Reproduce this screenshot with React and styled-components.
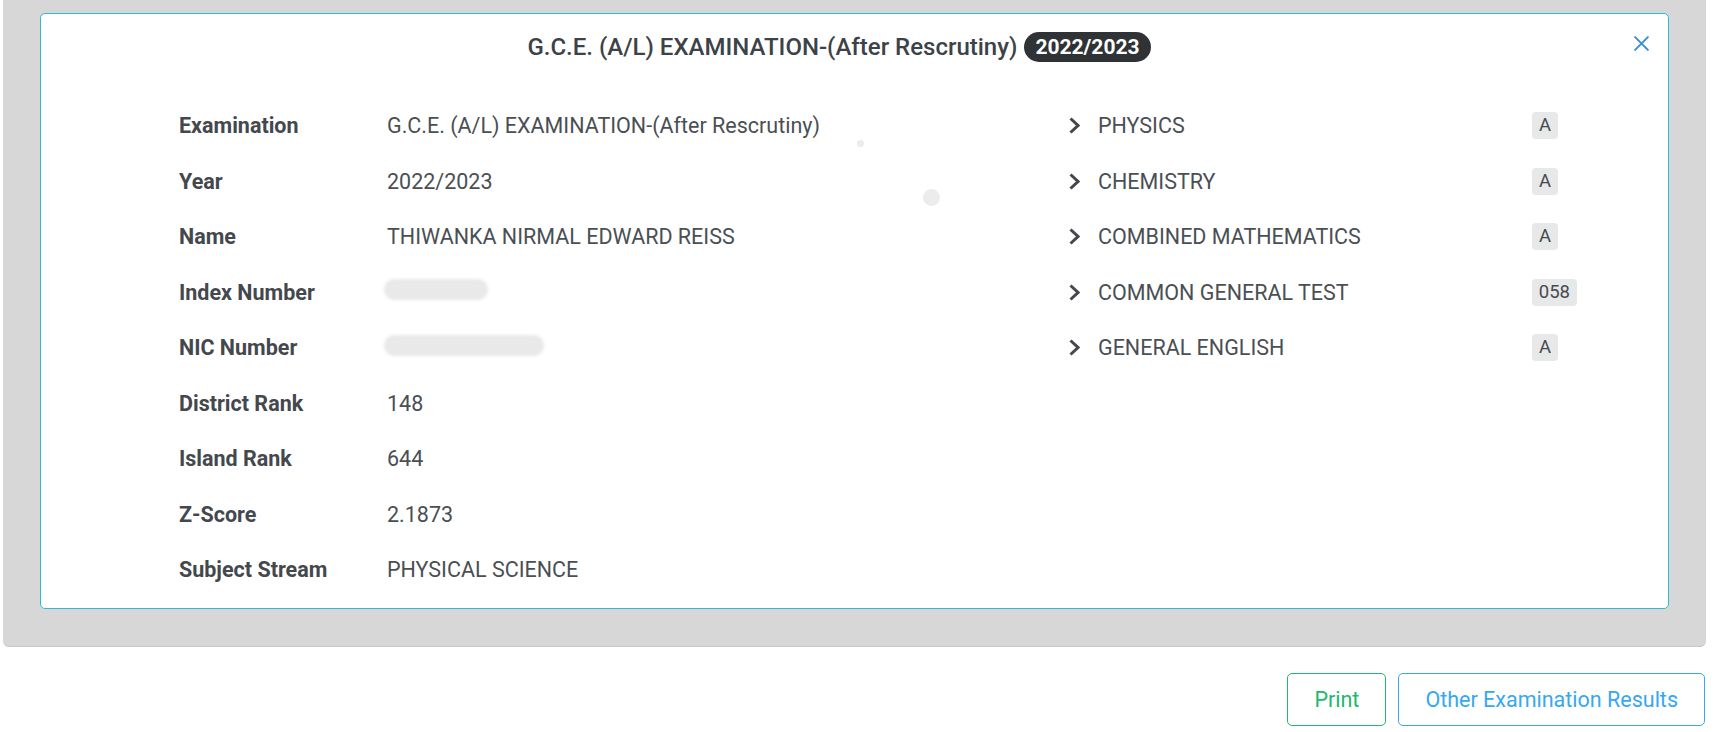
import React from 'react'
import styled, { createGlobalStyle } from 'styled-components'

const GlobalStyle = createGlobalStyle`
  html, body {
    margin: 0;
    padding: 0;
    background: #fff;
    font-family: Roboto, "Liberation Sans", sans-serif;
  }
`

const Page = styled.div`
  width: 1715px;
`

const Panel = styled.section`
  margin: 0 9px 0 3px;
  padding: 13px 37px 37px 37px;
  background: #d7d7d7;
  border-bottom: 1px solid #c8c8c8;
  border-radius: 0 0 6px 6px;
`

const Card = styled.div`
  position: relative;
  background: #fff;
  border: 1px solid #2bbdd3;
  border-radius: 5px;
  padding: 15px 0 10px 0;
`

const Header = styled.header`
  display: flex;
  justify-content: center;
  align-items: center;
  gap: 7px;
  height: 36px;
  margin-left: -31px;
`

const Title = styled.h2`
  margin: 0;
  font-size: 24px;
  font-weight: 500;
  color: #3d4247;
`

const YearPill = styled.span`
  background: #2f3336;
  color: #fff;
  font-weight: 700;
  font-size: 21px;
  border-radius: 15px;
  padding: 3px 11px 3px;
  line-height: 24px;
`

const Close = styled.button`
  position: absolute;
  top: 19px;
  right: 17px;
  border: 0;
  background: none;
  padding: 0;
  width: 20px;
  height: 20px;
  cursor: pointer;
  display: flex;
  align-items: center;
  justify-content: center;
`

const Body = styled.div`
  display: grid;
  grid-template-columns: 889px 1fr;
  padding-left: 138px;
  margin-top: 33px;
`

const Details = styled.div`
  display: flex;
  flex-direction: column;
`

const Row = styled.div`
  display: flex;
  align-items: center;
  height: 55.5px;
  font-size: 21.5px;
  color: #4a4f54;
`

const Label = styled.div`
  width: 208px;
  font-weight: 700;
  color: #44484d;
`

const Value = styled.div`
  color: #4a4f54;
`

const Redacted = styled.span`
  display: inline-block;
  width: ${p => p.w}px;
  height: 21px;
  background: #e9e9e9;
  border-radius: 10px;
  filter: blur(1.5px);
  margin-left: -3px;
`

const Subjects = styled.div`
  display: flex;
  flex-direction: column;
`

const SubjectRow = styled(Row)`
  width: 509px;
`

const Chevron = styled.svg`
  width: 12px;
  height: 17px;
  margin-right: 18px;
  flex-shrink: 0;
`

const SubjectName = styled.div`
  flex: 1;
  color: #4a4f54;
`

const Grade = styled.span`
  background: #e7e8e8;
  border-radius: 4px;
  font-size: 18.5px;
  color: #454a4f;
  padding: 0 7px;
  height: 27px;
  line-height: 27px;
  margin-right: ${p => (p.wide ? '0' : '19px')};
`

const Dot = styled.span`
  position: absolute;
  left: ${p => p.x}px;
  top: ${p => p.y}px;
  width: ${p => p.d}px;
  height: ${p => p.d}px;
  border-radius: 50%;
  background: #ececec;
`

const Actions = styled.div`
  display: flex;
  justify-content: flex-end;
  gap: 12px;
  margin: 26px 10px 0 0;
`

const Button = styled.button`
  height: 53px;
  padding: 0 26px;
  background: #fff;
  border: 1px solid ${p => p.color};
  color: ${p => p.color};
  border-radius: 5px;
  font-family: Roboto, "Liberation Sans", sans-serif;
  font-size: 21.5px;
  cursor: pointer;
`

const details = [
  ['Examination', 'G.C.E. (A/L) EXAMINATION-(After Rescrutiny)'],
  ['Year', '2022/2023'],
  ['Name', 'THIWANKA NIRMAL EDWARD REISS'],
  ['Index Number', null, 104],
  ['NIC Number', null, 160],
  ['District Rank', '148'],
  ['Island Rank', '644'],
  ['Z-Score', '2.1873'],
  ['Subject Stream', 'PHYSICAL SCIENCE'],
]

const subjects = [
  ['PHYSICS', 'A'],
  ['CHEMISTRY', 'A'],
  ['COMBINED MATHEMATICS', 'A'],
  ['COMMON GENERAL TEST', '058'],
  ['GENERAL ENGLISH', 'A'],
]

export default function App() {
  return (
    <Page>
      <GlobalStyle />
      <Panel>
        <Card>
          <Header>
            <Title>G.C.E. (A/L) EXAMINATION-(After Rescrutiny)</Title>
            <YearPill>2022/2023</YearPill>
          </Header>
          <Close aria-label="close">
            <svg width="17" height="17" viewBox="0 0 16 16">
              <path d="M2 2L14 14M14 2L2 14" stroke="#3b8fd8" strokeWidth="1.9" strokeLinecap="round" />
            </svg>
          </Close>
          <Dot x={816} y={126} d={7} />
          <Dot x={882} y={175} d={17} />
          <Body>
            <Details>
              {details.map(([label, value, w]) => (
                <Row key={label}>
                  <Label>{label}</Label>
                  <Value>{value ?? <Redacted w={w} />}</Value>
                </Row>
              ))}
            </Details>
            <Subjects>
              {subjects.map(([name, grade]) => (
                <SubjectRow key={name}>
                  <Chevron viewBox="0 0 12 17">
                    <path d="M2.5 1.5L10 8.5L2.5 15.5" fill="none" stroke="#44484d" strokeWidth="3" />
                  </Chevron>
                  <SubjectName>{name}</SubjectName>
                  <Grade wide={grade.length > 1}>{grade}</Grade>
                </SubjectRow>
              ))}
            </Subjects>
          </Body>
        </Card>
      </Panel>
      <Actions>
        <Button color="#20b86e">Print</Button>
        <Button color="#35a8f2">Other Examination Results</Button>
      </Actions>
    </Page>
  )
}
